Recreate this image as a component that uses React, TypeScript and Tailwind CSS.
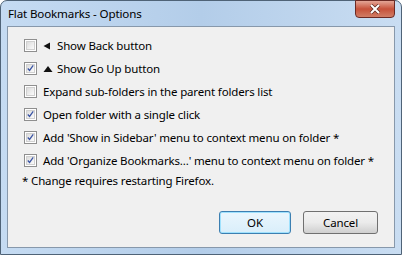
import React from "react";

const font = { fontFamily: '"Noto Sans", "Open Sans", sans-serif' };

const Check: React.FC<{ checked?: boolean }> = ({ checked }) => (
    <div className="w-[13px] h-[13px] border border-[#8f8f8f] bg-white p-[1px] shrink-0">
        <div className="w-full h-full bg-gradient-to-br from-[#dcdcdc] to-[#fbfbfb] border border-[#d0d0d0] flex items-center justify-center">
            {checked && (
                <svg width="9" height="9" viewBox="0 0 9 9">
                    <path d="M1 4.5 L3.3 7 L8 0.5" fill="none" stroke="#3a54a4" strokeWidth="1.6" />
                </svg>
            )}
        </div>
    </div>
);

const rows = [
    { label: "Show Back button", checked: false, icon: "left" },
    { label: "Show Go Up button", checked: true, icon: "up" },
    { label: "Expand sub-folders in the parent folders list", checked: false },
    { label: "Open folder with a single click", checked: true },
    { label: "Add 'Show in Sidebar' menu to context menu on folder *", checked: true },
    { label: "Add 'Organize Bookmarks...' menu to context menu on folder *", checked: true },
];

export default function App() {
    return (
        <div className="w-[402px] h-[255px] flex flex-col rounded-t-[7px] border border-[#4f6377] bg-gradient-to-r from-[#c5dbf2] via-[#b3cde9] to-[#c9ddf2] text-black text-[11.5px] tracking-[-0.15px]" style={font}>
            {/* Title bar */}
            <div className="h-[25px] flex items-start justify-between shrink-0">
                <div className="pl-[7px] pt-[5px] leading-[16px] text-[11.6px] tracking-[-0.15px]">Flat Bookmarks - Options</div>
                <div className="mr-[6px] -mt-[1px] w-[40px] h-[18px] rounded-b-[4px] border border-[#6b2a24] bg-gradient-to-b from-[#e3a596] via-[#c6513a] to-[#d07d66] flex items-center justify-center">
                    <svg width="12" height="10" viewBox="0 0 12 10">
                        <path d="M2 1 L10 9 M10 1 L2 9" stroke="#5a2a22" strokeWidth="3.4" />
                        <path d="M2 1 L10 9 M10 1 L2 9" stroke="#ffffff" strokeWidth="2" />
                    </svg>
                </div>
            </div>

            {/* Client area */}
            <div className="flex-1 mx-[6px] mb-[6px] border border-[#8798ab] bg-[#f0f0f0] flex flex-col pl-[16px] pr-[16px] pt-[7px] pb-[13px]">
                <div className="flex flex-col">
                    {rows.map((r, i) => (
                        <div key={i} className="h-[23px] flex items-center">
                            <Check checked={r.checked} />
                            <div className="ml-[6px] flex items-center">
                                {r.icon === "left" && (
                                    <svg width="14" height="8" viewBox="0 0 14 8">
                                        <path d="M0.5 4 L7 0.5 L7 7.5 Z" fill="#111" />
                                    </svg>
                                )}
                                {r.icon === "up" && (
                                    <svg width="14" height="8" viewBox="0 0 14 8">
                                        <path d="M0.5 7 L5 1 L9.5 7 Z" fill="#111" />
                                    </svg>
                                )}
                                <span className="leading-[16px] whitespace-nowrap">{r.label}</span>
                            </div>
                        </div>
                    ))}
                </div>
                <div className="-ml-[2px] mt-[1px] leading-[16px]">* Change requires restarting Firefox.</div>

                <div className="mt-auto flex justify-end gap-[12px]">
                    <button className="w-[72px] h-[23px] rounded-[3px] border border-[#3c7fb1] shadow-[inset_0_0_0_1px_#9fe1fd] bg-gradient-to-b from-[#eaf6fd] to-[#d9eefa]">OK</button>
                    <button className="w-[75px] h-[23px] rounded-[3px] border border-[#707070] bg-gradient-to-b from-[#f2f2f2] via-[#ebebeb] to-[#cfcfcf]">Cancel</button>
                </div>
            </div>
        </div>
    );
}
